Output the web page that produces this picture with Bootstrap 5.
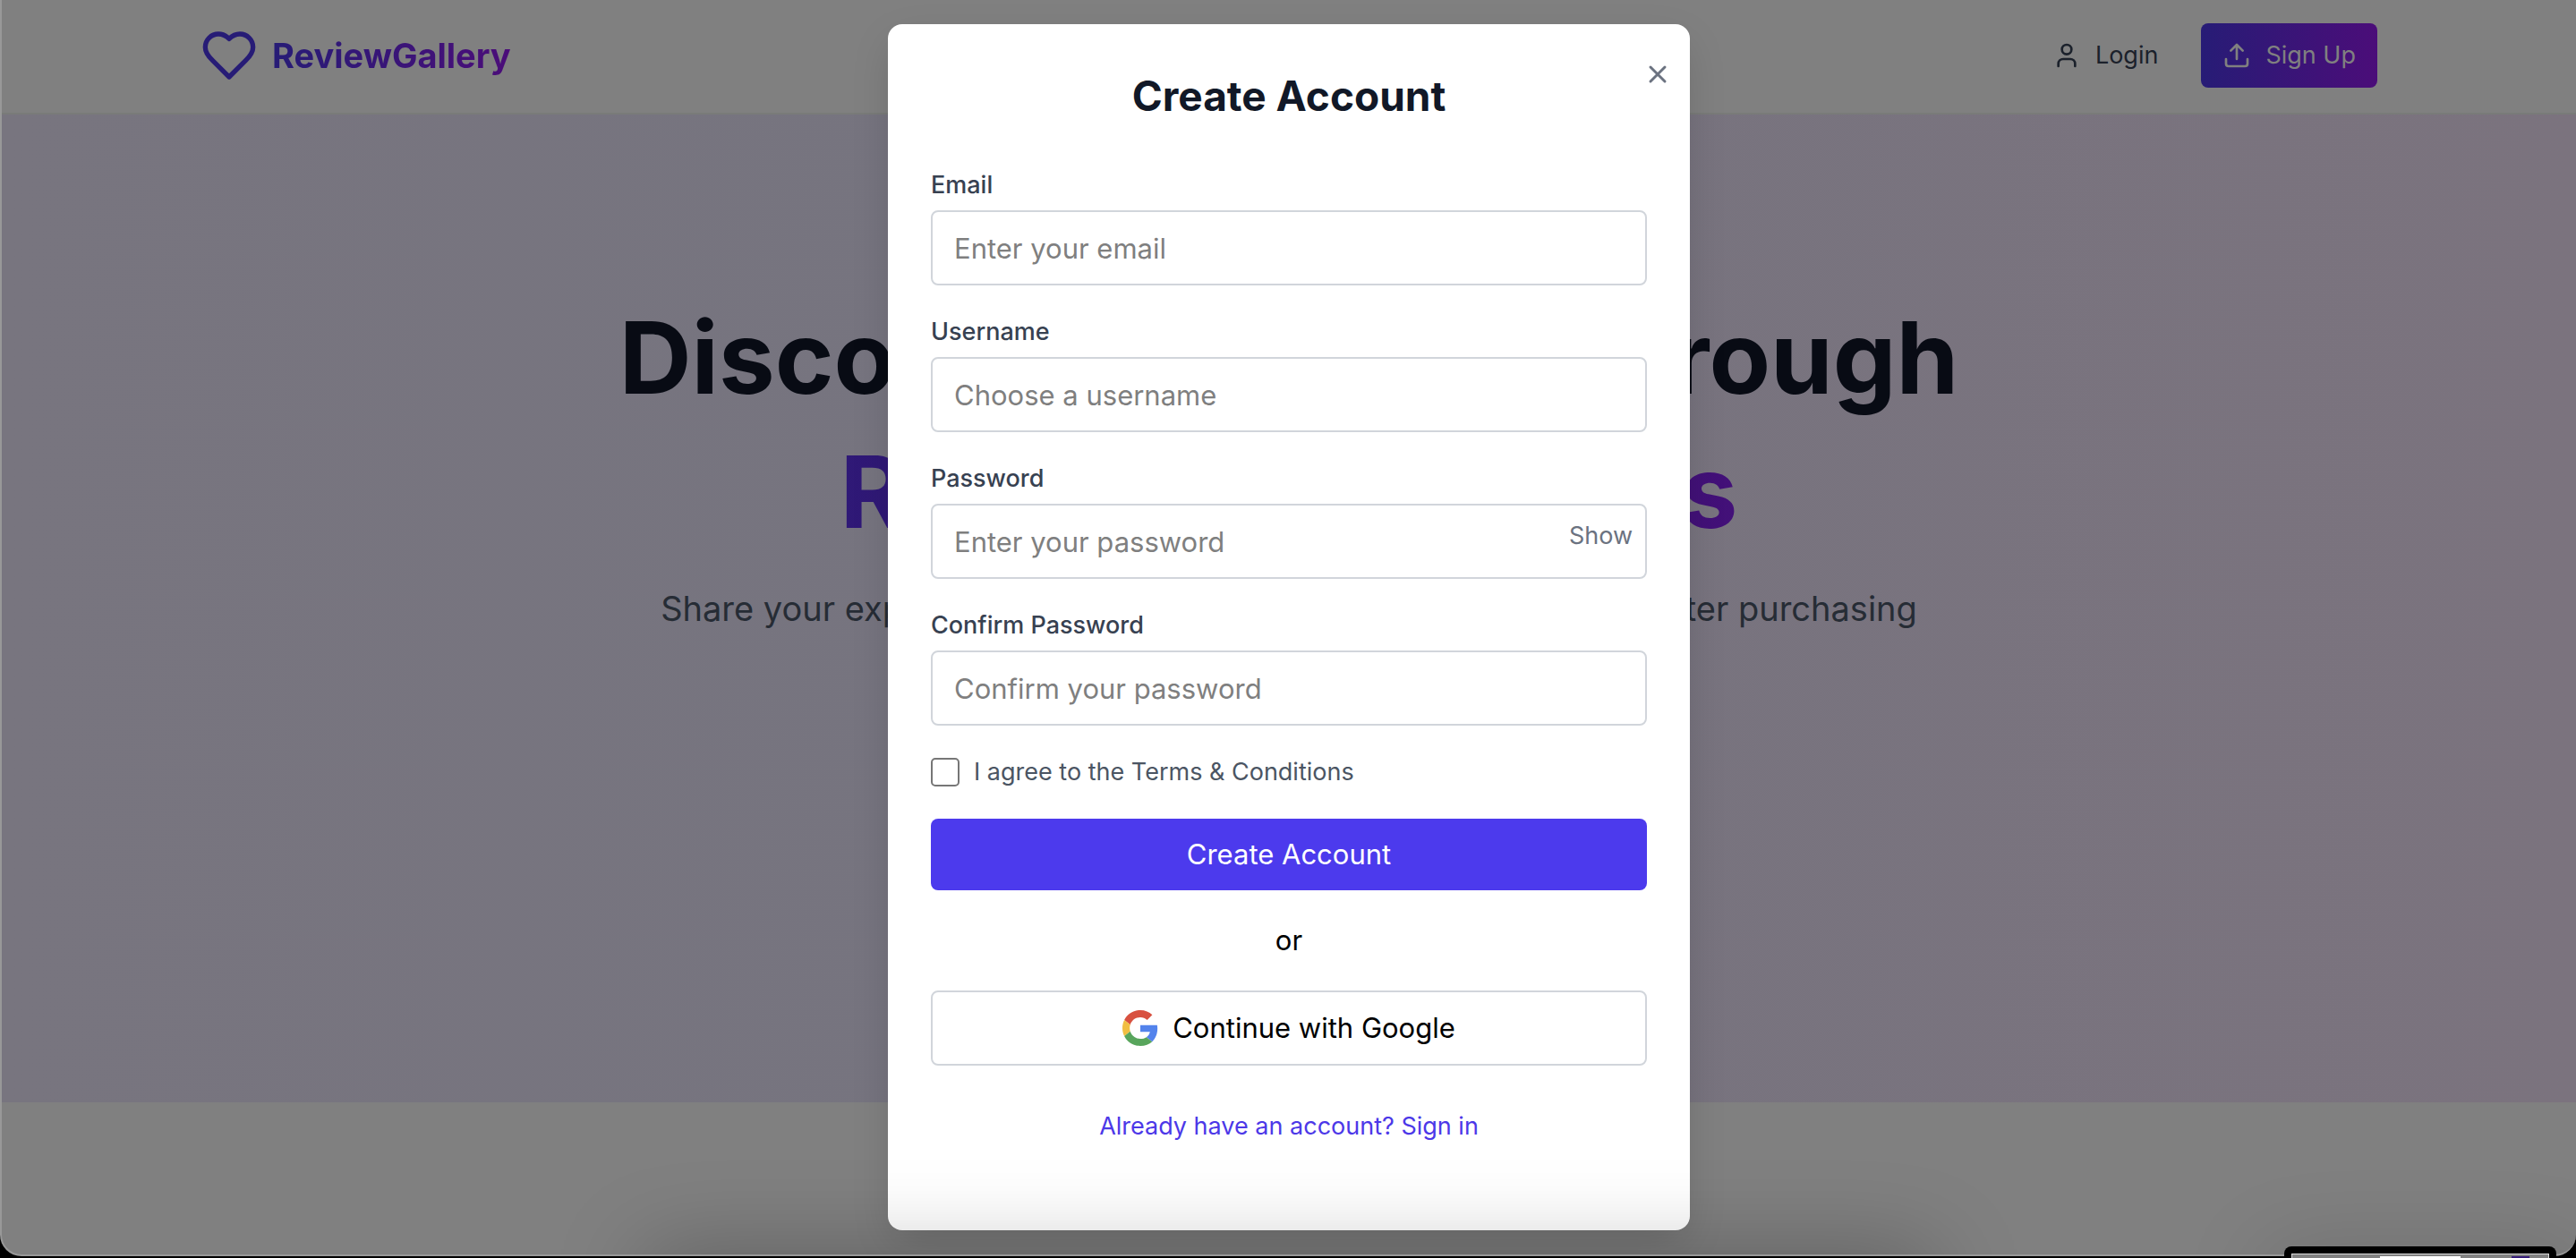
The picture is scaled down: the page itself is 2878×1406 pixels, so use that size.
<!DOCTYPE html>
<html lang="en">
<head>
<meta charset="utf-8">
<meta name="viewport" content="width=device-width, initial-scale=1">
<title>ReviewGallery</title>
<link href="https://cdn.jsdelivr.net/npm/bootstrap@5.3.0/dist/css/bootstrap.min.css" rel="stylesheet">
<style>
  html, body { height: 100%; }
  body { font-family: Inter, "Liberation Sans", sans-serif; font-size: 31px; line-height: 48px; background: #000; color: #000; overflow: hidden; }
  a { text-decoration: none; }
  .window-frame { height: calc(100vh - 2px); border-left: 2px solid #989898; border-bottom: 2px solid #989898; border-radius: 0 0 24px 24px; background: #808080; overflow: hidden; position: relative; }
  .site-header { border-bottom: 2px solid #797b79; background: #808080; }
  .site-inner { max-width: 2560px; padding: 26px 64px 28px; margin: 0 auto; }
  .logo-text { font-size: 38px; line-height: 56px; font-weight: 700; background: linear-gradient(90deg, #271c76, #4b0d79); -webkit-background-clip: text; background-clip: text; color: transparent; }
  .nav-text { font-size: 27px; line-height: 40px; padding: 16px 24px; border-radius: 8px; border: 0; }
  .login-link { color: #1b212b; }
  .signup-btn { color: #808080; background: linear-gradient(90deg, #271c76, #4b0d79); }
  .hero { background: linear-gradient(90deg, #78757f, #76747f 40%, #7b737e); padding: 196px 64px 0; height: 1104px; }
  .hero h1 { font-size: 112px; line-height: 150px; font-weight: 700; color: #080b14; margin: 0 auto; max-width: 1792px; }
  .hero h1 span { display: block; background: linear-gradient(90deg, #271c76, #4b0d79); -webkit-background-clip: text; background-clip: text; color: transparent; }
  .hero p { font-size: 38px; line-height: 56px; color: #262c35; margin: 28px 0 0; }
  .dialog-layer { position: absolute; inset: 0; padding-top: 27px; }
  .dialog-card { width: 896px; margin: 0 auto; padding: 48px 48px 96px; background: #fff; border-radius: 16px; box-shadow: 0 16px 48px -8px rgba(0,0,0,.18); position: relative; }
  .dialog-card h2 { font-size: 46px; line-height: 64px; font-weight: 700; color: #111827; margin: 0 0 48px; }
  .close-btn { position: absolute; top: 36px; right: 16px; padding: 8px; border: 0; background: none; color: #6b7280; display: flex; }
  .field-group { margin-bottom: 32px; position: relative; }
  .field-group label { display: block; font-size: 27px; line-height: 40px; font-weight: 500; color: #374151; margin-bottom: 8px; }
  .field-group input { height: 84px; font-size: 31px; padding: 16px 24px; border: 2px solid #d1d5db; border-radius: 8px; background: #fff; }
  .field-group input::placeholder { color: #7f7f7f; opacity: 1; }
  .show-btn { position: absolute; right: 16px; bottom: 28px; border: 0; padding: 0; background: none; color: #6b7280; font-size: 27px; line-height: 40px; }
  .terms-row { font-size: 27px; line-height: 40px; color: #4b5563; gap: 16px; }
  .terms-row input { appearance: none; width: 32px; height: 32px; border: 2px solid #767676; border-radius: 5px; background: #fff; }
  .wide-btn { height: 80px; border-radius: 8px; border: 0; background: #4c3aed; color: #fff; margin: 32px 0; }
  .google-btn { height: 84px; border-radius: 8px; border: 2px solid #d1d5db; background: #fff; color: #000; gap: 16px; margin-top: 32px; }
  .signin-row { font-size: 27px; line-height: 40px; }
  .signin-row a { color: #4c38e8; }
  .dock-shade { position: absolute; left: 25%; right: 25%; top: 100%; height: 80px; box-shadow: 0 0 100px rgba(0,0,0,.28); pointer-events: none; }
  .thumb-shade { position: absolute; left: 88%; right: 0; top: 100%; height: 80px; box-shadow: 0 0 100px rgba(0,0,0,.16); pointer-events: none; }
  .capture-thumb { position: fixed; right: 22px; bottom: 0; width: 304px; height: 13px; border-radius: 8px 8px 0 0; background: #000; padding: 8px 8px 0; }
  .capture-screen { height: 5px; background: #808080; border: solid #ddd; border-width: 1px 1px 0; padding: 2px 21px 0 98px; }
  .capture-card { width: 90px; height: 2px; background: #fff; }
  .capture-btn { width: 20px; height: 2px; background: #341a77; }
</style>
</head>
<body>
<div class="window-frame">
  <header class="site-header">
    <div class="site-inner d-flex align-items-center justify-content-between">
      <a href="#" class="d-flex align-items-center gap-3">
        <svg width="64" height="64" viewBox="0 0 24 24" fill="none" stroke="#271c76" stroke-width="2" stroke-linecap="round" stroke-linejoin="round"><path d="M19 14c1.490-1.460 3-3.210 3-5.500A5.500 5.500 0 0 0 16.500 3c-1.760 0-3 .5-4.500 2-1.500-1.500-2.740-2-4.500-2A5.500 5.500 0 0 0 2 8.500c0 2.300 1.500 4.050 3 5.500l7 7Z"/></svg>
        <span class="logo-text">ReviewGallery</span>
      </a>
      <nav class="d-flex align-items-center gap-4">
        <a href="#" class="nav-text login-link d-flex align-items-center gap-3">
          <svg width="32" height="32" viewBox="0 0 24 24" fill="none" stroke="currentColor" stroke-width="2" stroke-linecap="round" stroke-linejoin="round"><path d="M19 21v-2a4 4 0 0 0-4-4H9a4 4 0 0 0-4 4v2"/><circle cx="12" cy="7" r="4"/></svg>
          Login
        </a>
        <button type="button" class="nav-text signup-btn d-flex align-items-center gap-3">
          <svg width="32" height="32" viewBox="0 0 24 24" fill="none" stroke="currentColor" stroke-width="2" stroke-linecap="round" stroke-linejoin="round"><path d="M21 15v4a2 2 0 0 1-2 2H5a2 2 0 0 1-2-2v-4M17 8l-5-5-5 5M12 3v12"/></svg>
          Sign Up
        </button>
      </nav>
    </div>
  </header>
  <section class="hero text-center">
    <h1>Discover Products Through<span>Real User Reviews</span></h1>
    <p>Share your experiences and discover honest product reviews after purchasing</p>
  </section>

  <div class="dialog-layer">
    <form class="dialog-card" role="dialog" aria-labelledby="dialog-title">
      <button type="button" class="close-btn" aria-label="Close">
        <svg width="24" height="24" viewBox="0 0 24 24" stroke="currentColor" stroke-width="3" stroke-linecap="round"><path d="M4 4l16 16M20 4L4 20"/></svg>
      </button>
      <h2 id="dialog-title" class="text-center">Create Account</h2>
      <div class="field-group"><label for="email">Email</label><input id="email" type="email" class="form-control" placeholder="Enter your email"></div>
      <div class="field-group"><label for="username">Username</label><input id="username" type="text" class="form-control" placeholder="Choose a username"></div>
      <div class="field-group"><label for="password">Password</label><input id="password" type="password" class="form-control" placeholder="Enter your password"><button type="button" class="show-btn">Show</button></div>
      <div class="field-group"><label for="confirm">Confirm Password</label><input id="confirm" type="password" class="form-control" placeholder="Confirm your password"></div>
      <div class="terms-row d-flex align-items-center"><input id="terms" type="checkbox"><label for="terms">I agree to the Terms &amp; Conditions</label></div>
      <button type="submit" class="wide-btn w-100 d-block">Create Account</button>
      <div class="text-center">or</div>
      <button type="button" class="google-btn w-100 d-flex align-items-center justify-content-center">
        <svg width="40" height="40" viewBox="0 0 48 48"><path fill="#d85140" d="M24 9.500c3.540 0 6.710 1.220 9.210 3.600l6.850-6.850C35.900 2.380 30.470 0 24 0 14.620 0 6.510 5.380 2.560 13.220l7.980 6.190C12.430 13.720 17.740 9.500 24 9.500z"/><path fill="#5383ec" d="M46.980 24.550c0-1.570-.15-3.090-.38-4.550H24v9.020h12.940c-.58 2.960-2.260 5.480-4.780 7.180l7.730 6c4.510-4.180 7.090-10.360 7.090-17.650z"/><path fill="#f1be42" d="M10.530 28.590c-.48-1.450-.76-2.990-.76-4.590s.27-3.140.76-4.590l-7.980-6.190C.92 16.460 0 20.120 0 24s.92 7.540 2.560 10.780l7.970-6.190z"/><path fill="#58a55c" d="M24 48c6.480 0 11.930-2.130 15.890-5.810l-7.730-6c-2.150 1.450-4.920 2.300-8.160 2.300-6.260 0-11.570-4.220-13.470-9.910l-7.980 6.190C6.510 42.620 14.620 48 24 48z"/></svg>
        Continue with Google
      </button>
      <div class="signin-row text-center mt-5"><a href="#">Already have an account? Sign in</a></div>
    </form>
  </div>
  <div class="dock-shade"></div>
  <div class="thumb-shade"></div>
</div>
<div class="capture-thumb"><div class="capture-screen d-flex justify-content-between"><div class="capture-card"></div><div class="capture-btn"></div></div></div>
<script src="https://cdn.jsdelivr.net/npm/bootstrap@5.3.0/dist/js/bootstrap.bundle.min.js"></script>
</body>
</html>
